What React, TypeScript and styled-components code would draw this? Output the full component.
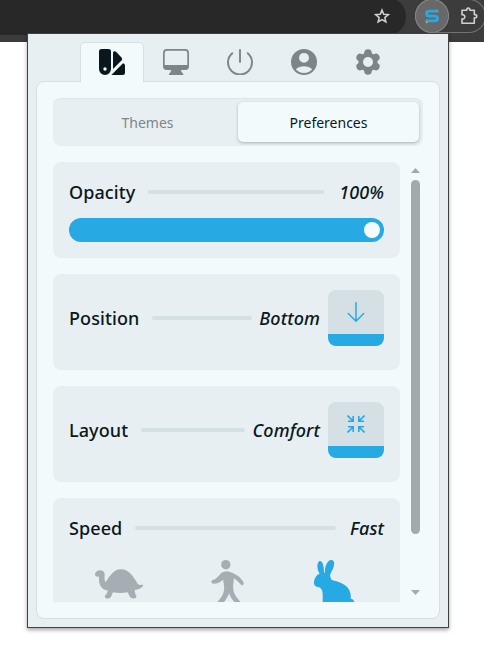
import React from "react";
import styled, { createGlobalStyle } from "styled-components";

const c = {
  ink: "#0a171c",
  muted: "#7d8588",
  card: "#e8eff2",
  page: "#f2fafc",
  line: "#d4e0e3",
  blue: "#27a9e3",
};

const GlobalStyle = createGlobalStyle`
  * { box-sizing: border-box; }
  html, body { margin: 0; height: 100%; overflow: hidden; background: #fff; }
  body { font-family: "Noto Sans", sans-serif; color: ${c.ink}; }
  button { font: inherit; color: inherit; border: 0; padding: 0; background: none; }
  svg { display: block; flex: none; }
`;

const Screen = styled.div`
  position: relative;
  width: 484px;
  height: 649px;
  overflow: hidden;
`;

const Toolbar = styled.header`
  display: flex;
  height: 42px;
  background: #3c3c3c;
`;

const AddressBar = styled.div`
  display: flex;
  flex: none;
  align-items: center;
  justify-content: flex-end;
  width: 406px;
  height: 37px;
  margin-top: -2px;
  padding: 0 16px 1px 0;
  background: #282828;
  border-radius: 0 18px 18px 0;
`;

const Extensions = styled.div`
  display: flex;
  flex: none;
  align-items: center;
  width: 71px;
  height: 34px;
  margin: -1px 0 0 9px;
  gap: 11px;
  border-radius: 17px;
  box-shadow: inset 0 0 0 1px #747474;
`;

const ExtensionButton = styled.button`
  display: grid;
  place-items: center;
  width: 34px;
  height: 34px;
  border-radius: 50%;
  background: #686868;
  box-shadow: inset 0 0 0 1px #868686;
`;

const Popup = styled.main`
  position: absolute;
  left: 27px;
  top: 33px;
  width: 422px;
  height: 595px;
  padding: 8px;
  border: 1px solid #3d4245;
  background: ${c.card};
  box-shadow: 0 2px 4px rgba(0, 0, 0, 0.35);
`;

const TabStrip = styled.nav`
  display: flex;
  height: 40px;
  padding-left: 44px;
`;

const IconTab = styled.button<{ $active?: boolean }>`
  display: grid;
  justify-content: center;
  align-content: start;
  width: 64px;
  height: 40px;
  padding-top: ${(p) => (p.$active ? 6 : 7)}px;
  color: ${(p) => (p.$active ? c.ink : c.muted)};
  border: ${(p) => (p.$active ? `1px solid ${c.line}` : "0")};
  border-bottom: 0;
  border-radius: 5px 5px 0 0;
  background: ${(p) => (p.$active ? c.page : "transparent")};
  z-index: ${(p) => (p.$active ? 1 : 0)};
`;

const Panel = styled.section`
  height: 538px;
  width: 404px;
  margin-top: -1px;
  padding: 16px;
  border: 1px solid ${c.line};
  border-radius: 8px;
  background: ${c.page};
`;

const Segments = styled.div`
  display: flex;
  width: 370px;
  height: 48px;
  padding: 4px;
  border-radius: 8px;
  background: ${c.card};
  box-shadow: inset 0 1px 1px rgba(0, 30, 40, 0.05);
`;

const Segment = styled.button<{ $active?: boolean }>`
  flex: 1 1 0;
  min-width: 0;
  height: 40px;
  padding-top: 1px;
  border-radius: 5px;
  font-size: 14px;
  color: ${(p) => (p.$active ? c.ink : c.muted)};
  background: ${(p) => (p.$active ? c.page : "transparent")};
  box-shadow: ${(p) => (p.$active ? "0 1px 3px rgba(0,20,30,.28)" : "none")};
`;

const ScrollArea = styled.div`
  display: flex;
  justify-content: space-between;
  width: 367px;
  height: 440px;
  margin-top: 16px;
  overflow: hidden;
`;

const Cards = styled.div`
  display: flex;
  flex-direction: column;
  gap: 16px;
  width: 347px;
`;

const Card = styled.section`
  flex: none;
  height: 96px;
  padding: 16px;
  border-radius: 8px;
  background: ${c.card};
`;

const SpeedCard = styled(Card)`
  height: 126px;
`;

const Row = styled.div<{ $tall?: boolean }>`
  display: flex;
  align-items: center;
  height: ${(p) => (p.$tall ? 56 : 28)}px;
`;

const Label = styled.h2`
  margin: 0;
  font-size: 18px;
  line-height: 28px;
  font-weight: 500;
  letter-spacing: 0.1px;
`;

const Rule = styled.span<{ $end: number }>`
  flex: 1;
  height: 4px;
  margin: 0 ${(p) => p.$end}px 0 13px;
  border-radius: 2px;
  background: ${c.line};
`;

const Value = styled.em`
  font-size: 18px;
  line-height: 28px;
  font-weight: 500;
  letter-spacing: 0.1px;
`;

const Slider = styled.div`
  display: flex;
  align-items: center;
  justify-content: flex-end;
  height: 24px;
  margin-top: 12px;
  padding-right: 4px;
  border-radius: 12px;
  background: ${c.blue};
`;

const Thumb = styled.span`
  width: 16px;
  height: 16px;
  border-radius: 50%;
  background: ${c.page};
`;

const Choice = styled.button`
  display: grid;
  place-items: center;
  width: 56px;
  height: 56px;
  margin-left: 8px;
  border-radius: 8px;
  border-bottom: 12px solid ${c.blue};
  background: linear-gradient(${c.line}, ${c.line}) padding-box;
  color: ${c.blue};
  overflow: hidden;
`;

const Speeds = styled.div`
  display: flex;
  justify-content: space-between;
  margin-top: 18px;
  padding: 0 26px;
  color: #a6aeb3;
`;

const Scrollbar = styled.div`
  display: flex;
  flex-direction: column;
  align-items: center;
  width: 9px;
  padding-top: 6px;
`;

const ScrollThumb = styled.span`
  width: 9px;
  height: 354px;
  margin: 7px 0 56px;
  border-radius: 5px;
  background: #a2aaac;
`;

const Arrow = ({ down = false }: { down?: boolean }) => (
  <svg width="9" height="5" viewBox="0 0 9 5" fill="#a2aaac">
    <path d={down ? "M0 0h9L4.500 5z" : "M0 5h9L4.500 0z"} />
  </svg>
);

const Star = () => (
  <svg width="16" height="16" viewBox="0 0 16 16" fill="none" stroke="#d0d0d0" strokeWidth="1.500">
    <path d="M8 2l1.700 4.200 4.600.4-3.500 3 1.100 4.400L8 11.600 4.100 14l1.100-4.400-3.500-3 4.600-.4z" />
  </svg>
);

const Snake = () => (
  <svg width="16" height="16" viewBox="0 0 16 16" fill="none">
    <path d="M13.500 3.100H5.100Q2.600 3.100 2.600 5.600T5.100 8.100H11Q13.500 8.100 13.500 10.500T11 12.900H2.600" stroke={c.blue} strokeWidth="2.800" strokeLinecap="round" />
    <circle cx="12.500" cy="2" r=".6" fill="#d98545" />
    <circle cx="2.800" cy="14.400" r=".8" fill="#c9cf3d" />
  </svg>
);

const Puzzle = () => (
  <svg width="18" height="18" viewBox="0 0 18 18" fill="none" stroke="#d0d0d0" strokeWidth="1.600" strokeLinejoin="round">
    <path d="M2 3.300h4.700V2.700a1.600 1.600 0 0 1 3.200 0v.6h4.400v4.300h.9a1.600 1.600 0 0 1 0 3.200h-.9v5.400H2v-4.300a2.200 2.200 0 1 0 0-4.200z" />
  </svg>
);

const Swatches = () => (
  <svg width="26" height="26" viewBox="0 0 26 26" fill="currentColor">
    <path fillRule="evenodd" d="M2.500 0h7Q12 0 12 2.500V20a6 6 0 0 1-12 0V2.500Q0 0 2.500 0zM6 18.300a1.700 1.700 0 1 0 0 3.400 1.700 1.700 0 0 0 0-3.400z" />
    <path d="M14 4.200C14 2.200 16 1.800 17.300 3l5.200 5.400q1.500 1.700 0 3.200L14 20z" />
    <path d="M12.400 26 24 14.300q2 .2 2 2.200v7q0 2.500-2.500 2.500z" />
  </svg>
);

const Monitor = () => (
  <svg width="26" height="26" viewBox="0 0 26 26" fill="currentColor">
    <path fillRule="evenodd" d="M3.800 0h18.400Q26 0 26 3.800v13.400q0 3.800-3.800 3.800H18l.7 2.300 1.600 1.400V26H6v-1.300l1.500-1.400L8.200 21H3.800Q0 21 0 17.200V3.800Q0 0 3.800 0zM4 1.700Q1.700 1.700 1.700 4v12h22.600V4q0-2.300-2.300-2.300z" />
  </svg>
);

const Power = () => (
  <svg width="26" height="26" viewBox="0 0 26 26" fill="none" stroke="currentColor" strokeWidth="1.900" strokeLinecap="round">
    <path d="M13 1v12M5.300 4.300a12 12 0 1 0 15.400 0" />
  </svg>
);

const Account = () => (
  <svg width="26" height="26" viewBox="2 2 20 20" fill="currentColor">
    <path fillRule="evenodd" d="M12 2a10 10 0 1 0 0 20 10 10 0 0 0 0-20zm0 3a3.800 3.800 0 1 1 0 7.600A3.800 3.800 0 0 1 12 5zm0 15.500c-2.600 0-4.900-1.100-6.300-2.900C7.100 16 9.700 15.300 12 15.300s4.900.7 6.300 2.300c-1.400 1.800-3.700 2.900-6.300 2.900z" />
  </svg>
);

const Gear = () => (
  <svg width="26" height="26" viewBox="0 0 26 26" fill="currentColor">
    <path d="M13 4v18M5.200 8.500l15.600 9M5.200 17.500l15.600-9" stroke="currentColor" strokeWidth="7.600" strokeLinecap="round" />
    <circle cx="13" cy="13" r="9.600" />
    <circle cx="13" cy="13" r="5" fill={c.card} />
  </svg>
);

const ArrowDown = () => (
  <svg width="18" height="20" viewBox="0 0 18 20" fill="none" stroke="currentColor" strokeWidth="1.500" strokeLinecap="round" strokeLinejoin="round">
    <path d="M9 .8v18.400M1.300 11.500 9 19.200l7.700-7.700" />
  </svg>
);

const Compress = () => (
  <svg width="18" height="18" viewBox="0 0 18 18" fill="none" stroke="currentColor" strokeWidth="1.600">
    <path d="M.5.500 6 6M1 6.200h5.200V1M17.500.500 12 6M17 6.200h-5.200V1M.5 17.500 6 12M1 11.800h5.200V17M17.500 17.500 12 12M17 11.800h-5.200V17" />
  </svg>
);

const Turtle = () => (
  <svg width="48" height="48" viewBox="135 180 144 144" fill="currentColor">
    <path d="M135 223c1-8 8-12 15-12 9 0 15 6 14 15-1 8-1 14 3 20 10-13 22-38 46-38 24 0 38 23 49 42 3 5 8 6 13 4 4-1 6 3 2 6-5 5-12 8-20 9l-3 1 2 13c5 4 4 12-2 12-8 1-13-1-15-6l-6-12c-15 3-30 3-44 0l-6 13c-3 5-9 6-15 5-5-1-4-9 1-12l5-11c-15-3-23-11-26-24-1-7-1-13-2-19-5 2-11 1-11-6z" />
  </svg>
);

const Walker = () => (
  <svg width="48" height="48" viewBox="457.500 180 144 144" fill="currentColor">
    <circle cx="526" cy="194" r="14" />
    <path d="M513 218q15-9 32 0c17 7 27 16 34 29 3 8-4 12-9 6-6-8-12-13-20-18l-2 23c-1 20 7 30 17 42l18 22h-16c-15-15-24-22-31-42-7 16-13 25-28 43h-16l11-20c13-15 18-24 18-43l-3-21c-8 7-16 12-30 12-7-1-7-9-1-11 11-3 18-14 26-22z" />
  </svg>
);

const Rabbit = () => (
  <svg width="48" height="48" viewBox="210 180 144 144" fill={c.blue}>
    <path d="M239 221c-9-12-9-32-1-38 9-2 14 13 14 34l3 2c-2-21 8-38 18-39 10-1 11 11 8 20-3 11-9 17-11 26 1 6 3 10 5 14 23 6 46 13 53 31 4 9 5 17 4 25 7 0 11 5 11 13v15h-95v-24c0-17 2-30-9-38-8 0-17-4-17-13 0-14 7-24 17-28z" />
  </svg>
);

export default function App() {
  return (
    <Screen>
      <GlobalStyle />
      <Toolbar>
        <AddressBar><Star /></AddressBar>
        <Extensions>
          <ExtensionButton aria-label="Extension"><Snake /></ExtensionButton>
          <Puzzle />
        </Extensions>
      </Toolbar>
      <Popup>
        <TabStrip>
          <IconTab $active aria-label="Appearance"><Swatches /></IconTab>
          <IconTab aria-label="Display"><Monitor /></IconTab>
          <IconTab aria-label="Power"><Power /></IconTab>
          <IconTab aria-label="Account"><Account /></IconTab>
          <IconTab aria-label="Settings"><Gear /></IconTab>
        </TabStrip>
        <Panel>
          <Segments>
            <Segment>Themes</Segment>
            <Segment $active>Preferences</Segment>
          </Segments>
          <ScrollArea>
            <Cards>
              <Card>
                <Row><Label>Opacity</Label><Rule $end={15} /><Value>100%</Value></Row>
                <Slider><Thumb /></Slider>
              </Card>
              <Card>
                <Row $tall>
                  <Label>Position</Label><Rule $end={7} /><Value>Bottom</Value>
                  <Choice aria-label="Bottom"><ArrowDown /></Choice>
                </Row>
              </Card>
              <Card>
                <Row $tall>
                  <Label>Layout</Label><Rule $end={7} /><Value>Comfort</Value>
                  <Choice aria-label="Comfort"><Compress /></Choice>
                </Row>
              </Card>
              <SpeedCard>
                <Row><Label>Speed</Label><Rule $end={14} /><Value>Fast</Value></Row>
                <Speeds><Turtle /><Walker /><Rabbit /></Speeds>
              </SpeedCard>
            </Cards>
            <Scrollbar><Arrow /><ScrollThumb /><Arrow down /></Scrollbar>
          </ScrollArea>
        </Panel>
      </Popup>
    </Screen>
  );
}
